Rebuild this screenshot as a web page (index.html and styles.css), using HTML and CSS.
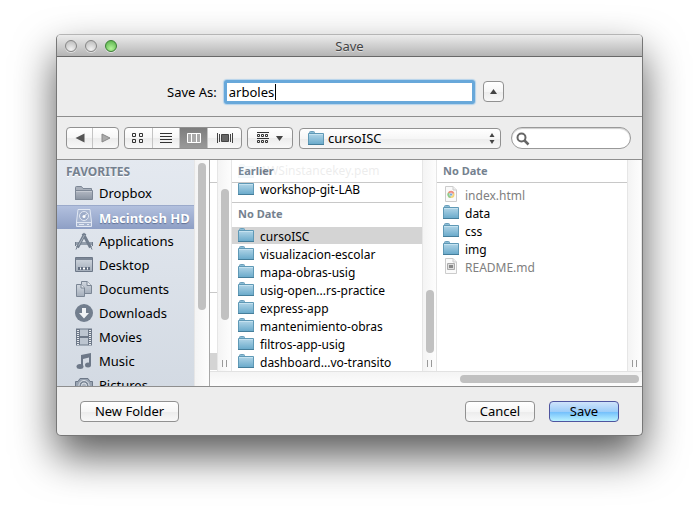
FILE: index.html
```html
<!DOCTYPE html>
<html lang="en">
<head>
<meta charset="utf-8">
<title>Save</title>
<link rel="stylesheet" href="styles.css">
</head>
<body>
<svg class="defs" aria-hidden="true">
  <defs>
    <linearGradient id="blue" x1="0" y1="0" x2="0" y2="1"><stop offset="0" stop-color="#b3d6e8"/><stop offset="1" stop-color="#68a9ca"/></linearGradient>
    <linearGradient id="slate" x1="0" y1="0" x2="0" y2="1"><stop offset="0" stop-color="#b4bac4"/><stop offset="1" stop-color="#8a94a2"/></linearGradient>
    <linearGradient id="pale" x1="0" y1="0" x2="0" y2="1"><stop offset="0" stop-color="#d3d9e1"/><stop offset="1" stop-color="#a3adba"/></linearGradient>
    <symbol id="folder" viewBox="0 0 16 14">
      <path d="M1.500 3V1.500Q1.500 .5 2.500 .5H5.500Q6.500 .5 6.500 1.500V2.500H14.500V6H1.500z" fill="#8bbdd6" stroke="#6a9fbb"/>
      <path d="M.5 2.500H15.500V13.500H.5z" fill="url(#blue)" stroke="#5f99b6"/>
      <path d="M0 13.500H16" stroke="#457e9b"/><path d="M1 3.500H15" stroke="#c5e2f0"/>
    </symbol>
  </defs>
</svg>
<main class="window">
  <header class="titlebar">
    <div class="lights">
      <button class="light" aria-label="Close"></button>
      <button class="light" aria-label="Minimize"></button>
      <button class="light green" aria-label="Zoom"></button>
    </div>
    <h1>Save</h1>
  </header>

  <section class="name-row">
    <label for="filename">Save As:</label>
    <div class="name-field"><input id="filename" type="text" value="arboles"><span class="caret"></span></div>
    <button class="btn collapse" aria-label="Collapse"><svg width="7" height="5" viewBox="0 0 7 5"><path d="M3.500 0L7 5H0z" fill="#444"/></svg></button>
  </section>

  <section class="toolbar">
    <div class="segments nav">
      <button aria-label="Back"><svg width="10" height="10" viewBox="0 0 10 10"><path d="M9.500 .5V9.500L.5 5z" fill="#555"/></svg></button>
      <button aria-label="Forward"><svg width="10" height="10" viewBox="0 0 10 10"><path d="M1 1V9L9 5z" fill="#aaa" stroke="#888"/></svg></button>
    </div>
    <div class="segments views">
      <button aria-label="Icon view"><svg width="12" height="12" viewBox="0 0 12 12" fill="none" stroke="#333"><path d="M.5 1.500h3v3h-3zM7.500 1.500h3v3h-3zM.5 7.500h3v3h-3zM7.500 7.500h3v3h-3z"/></svg></button>
      <button aria-label="List view"><svg width="12" height="12" viewBox="0 0 12 12" stroke="#333"><path d="M0 1.500H12M0 4.500H12M0 7.500H12M0 10.500H12"/></svg></button>
      <button class="on" aria-label="Column view"><svg width="14" height="12" viewBox="0 0 14 12" fill="#aaa" stroke="#fff"><path d="M.5 1.500H13.500V10.500H.5zM4.500 1.500V10.500M9.500 1.500V10.500"/></svg></button>
      <button aria-label="Cover flow"><svg width="16" height="12" viewBox="0 0 16 12"><path d="M.5 1V11M2.500 2V10M13.500 2V10M15.500 1V11" stroke="#444"/><path d="M4.500 2.500H11.500V9.500H4.500z" fill="#666" stroke="#444"/></svg></button>
    </div>
    <button class="btn arrange" aria-label="Arrange items"><svg width="12" height="12" viewBox="0 0 12 12" fill="none" stroke="#333"><path d="M0 .5H12M0 6.500H12M.5 2.500h2v2h-2zM4.500 2.500h2v2h-2zM8.500 2.500h2v2h-2zM.5 8.500h2v2h-2zM4.500 8.500h2v2h-2zM8.500 8.500h2v2h-2z"/></svg><svg width="7" height="5" viewBox="0 0 7 5"><path d="M0 0H7L3.500 5z" fill="#444"/></svg></button>
    <div class="popup">
      <svg class="popup-folder" width="16" height="14"><use href="#folder"/></svg>
      <select aria-label="Folder"><option>cursoISC</option></select>
      <svg class="popup-arrows" width="6" height="11" viewBox="0 0 6 11"><path d="M3 0L5.500 4H.5zM3 11L.5 7H5.500z" fill="#444"/></svg>
    </div>
    <div class="search">
      <svg width="14" height="14" viewBox="0 0 14 14" fill="none" stroke="#666"><circle cx="5.500" cy="5.500" r="4" stroke-width="2"/><path d="M8.500 8.500L12.500 12.500" stroke-width="2.500"/></svg>
      <input type="search" aria-label="Search">
    </div>
  </section>

  <section class="browser">
    <nav class="sidebar">
      <h2>FAVORITES</h2>
      <ul>
        <li><a href="#"><svg width="18" height="18" viewBox="0 0 18 18"><path d="M.5 15.500V3.500Q.5 2.500 1.500 2.500H6.500L8 4.500H16.500V15.500z" fill="#a9b0bb" stroke="#7d8795"/><path d="M.5 15.500V6.500H17.500V15.500z" fill="url(#slate)" stroke="#7d8795"/><path d="M1 7.500H17" stroke="#c5cad2"/></svg>Dropbox</a></li>
        <li class="selected"><a href="#"><svg width="18" height="18" viewBox="0 0 18 18"><path d="M3 .5H15L16.500 13V17.500H1.500V13z" fill="#a7b5d0" stroke="#e2e8f3"/><path d="M2 13.500H16M4 15.500H9M12 15.500H14" stroke="#e2e8f3"/><circle cx="9" cy="7" r="4.500" fill="#9dacc9" stroke="#e2e8f3"/><path d="M12 4.500L9 7.500" stroke="#fff"/><circle cx="9" cy="7.500" r="1.500" fill="#fff"/></svg>Macintosh HD</a></li>
        <li><a href="#"><svg width="18" height="18" viewBox="0 0 18 18" fill="none"><path d="M0 11.500H18" stroke="#929dab" stroke-width="3"/><path d="M.5 10V14M17.500 10V14" stroke="#6f7b8b"/><path d="M2.500 15.500L10 1.500M15.500 15.500L8 1.500" stroke="#727e8e" stroke-width="3"/><path d="M3.500 13.500L9.500 3" stroke="#a6b0bc"/><path d="M2.500 14L1 17.500M15.500 14L17 17.500" stroke="#6f7b8b"/></svg>Applications</a></li>
        <li><a href="#"><svg width="18" height="18" viewBox="0 0 18 18"><path d="M.5 1.500H17.500V15.500H.5z" fill="url(#pale)" stroke="#6d7888"/><path d="M1 3H17" stroke="#7c8796" stroke-width="2"/><path d="M3 11H15V14H3z" fill="#647082"/><path d="M5 12.500H6M8 12.500H10M12 12.500H13" stroke="#fff" stroke-width="2"/></svg>Desktop</a></li>
        <li><a href="#"><svg width="18" height="18" viewBox="0 0 18 18" stroke="#7b8695"><path d="M6.500 1.500H12L16.500 5.500V13.500H6.500z" fill="url(#pale)"/><path d="M12 1.500V5.500H16.500" fill="#e5e9ee"/><path d="M1.500 4.500H6L9.500 8V16.500H1.500z" fill="url(#pale)"/><path d="M6 4.500V8H9.500" fill="#e5e9ee"/></svg>Documents</a></li>
        <li><a href="#"><svg width="18" height="18" viewBox="0 0 18 18"><circle cx="9" cy="9" r="9" fill="#727e8e"/><path d="M7 4H11V9H14L9 14.500L4 9H7z" fill="#f0f3f6"/></svg>Downloads</a></li>
        <li><a href="#"><svg width="18" height="18" viewBox="0 0 18 18"><path d="M1 .5H17V17.500H1z" fill="#6d7888"/><path d="M5 1.500H13V8H5zM5 10H13V16.500H5z" fill="#bcc5d0"/><path d="M3 2V17M15 2V17" stroke="#e6eaef" stroke-width="2" stroke-dasharray="1 1"/></svg>Movies</a></li>
        <li><a href="#"><svg width="18" height="18" viewBox="0 0 18 18"><path d="M6 3L16 1V13.500H14V5.500L8 7V15H6z" fill="#6d7888"/><ellipse cx="5" cy="14.500" rx="3.500" ry="2.500" fill="#6d7888"/><ellipse cx="13" cy="13" rx="3" ry="2.500" fill="#6d7888"/></svg>Music</a></li>
        <li><a href="#"><svg width="18" height="18" viewBox="0 0 18 18"><path d="M.5 5.500H3L5 2.500H13L15 5.500H17.500V15.500H.5z" fill="#98a3b1" stroke="#6d7888"/><circle cx="9" cy="9.500" r="5" fill="#7b8796" stroke="#dfe4ea"/><circle cx="9" cy="9.500" r="2.500" fill="#aab3bf" stroke="#dfe4ea"/></svg>Pictures</a></li>
      </ul>
    </nav>
    <div class="track side-track"><i class="thumb"></i></div>
    <div class="panes">
      <div class="columns">
        <div class="column stub"><div class="stub-head"></div><div class="stub-body"></div><div class="stub-selected"></div></div>
        <div class="track first-track"><i class="thumb"></i><i class="grip"></i></div>
        <div class="column">
          <h3><span class="ghost" aria-hidden="true"><svg width="16" height="14"><use href="#folder"/></svg>AWSinstancekey.pem</span>Earlier</h3>
          <ul class="scrolled">
            <li><svg width="16" height="14"><use href="#folder"/></svg>workshop-git-LAB</li>
          </ul>
          <h3 class="group">No Date</h3>
          <ul>
            <li class="current"><svg width="16" height="14"><use href="#folder"/></svg>cursoISC</li>
            <li><svg width="16" height="14"><use href="#folder"/></svg>visualizacion-escolar</li>
            <li><svg width="16" height="14"><use href="#folder"/></svg>mapa-obras-usig</li>
            <li><svg width="16" height="14"><use href="#folder"/></svg>usig-open...rs-practice</li>
            <li><svg width="16" height="14"><use href="#folder"/></svg>express-app</li>
            <li><svg width="16" height="14"><use href="#folder"/></svg>mantenimiento-obras</li>
            <li><svg width="16" height="14"><use href="#folder"/></svg>filtros-app-usig</li>
            <li><svg width="16" height="14"><use href="#folder"/></svg>dashboard...vo-transito</li>
          </ul>
        </div>
        <div class="track second-track"><i class="thumb"></i><i class="grip"></i></div>
        <div class="column">
          <h3>No Date</h3>
          <ul class="padded">
            <li class="dim"><svg width="16" height="16" viewBox="0 0 16 16"><path d="M2.500 .5H10L13.500 4V15.500H2.500z" fill="#fafafa" stroke="#ccc"/><path d="M10 .5V4H13.500" fill="#eee" stroke="#ccc"/><circle cx="8" cy="8.500" r="3.500" fill="#f3d477"/><path d="M8 8.500L5 6.500A3.500 3.500 0 0 1 11.300 7z" fill="#ee8a80"/><path d="M8 8.500L5 6.500A3.500 3.500 0 0 0 7.500 12z" fill="#8ccb92"/><circle cx="8" cy="8.500" r="1.500" fill="#77a9dd" stroke="#fff" stroke-width=".5"/></svg>index.html</li>
            <li><svg width="16" height="14"><use href="#folder"/></svg>data</li>
            <li><svg width="16" height="14"><use href="#folder"/></svg>css</li>
            <li><svg width="16" height="14"><use href="#folder"/></svg>img</li>
            <li class="dim"><svg width="16" height="16" viewBox="0 0 16 16"><path d="M2.500 .5H10L13.500 4V15.500H2.500z" fill="#fafafa" stroke="#ccc"/><path d="M10 .5V4H13.500" fill="#eee" stroke="#ccc"/><path d="M4.500 5.500H11.500V11.500H4.500z" fill="#ddd" stroke="#aaa"/><path d="M6 7H10V10H6z" fill="#888"/></svg>README.md</li>
          </ul>
        </div>
        <div class="track"><i class="grip"></i></div>
      </div>
      <div class="h-track"><i class="h-thumb"></i></div>
    </div>
  </section>

  <footer class="actions">
    <button class="btn new-folder">New Folder</button>
    <button class="btn">Cancel</button>
    <button class="btn primary">Save</button>
  </footer>
</main>
</body>
</html>
```
FILE: styles.css
```css
* { box-sizing: border-box; }

body {
  margin: 0;
  padding: 34px 56px 78px;
  background: #fff;
  color: #000;
  font: 13px/18px "Noto Sans", "Open Sans", sans-serif;
  overflow: hidden;
}

h1, h2, h3, ul { margin: 0; padding: 0; list-style: none; }
button, input, select { font: inherit; color: inherit; margin: 0; padding: 0; }
svg { display: block; flex: none; }
.defs { position: absolute; width: 0; height: 0; }

.window {
  border: 1px solid #777;
  border-top-color: #b5b5b5;
  border-radius: 5px;
  background: #ededed;
  box-shadow: 0 20px 42px rgba(0, 0, 0, .65);
}

/* Title bar */
.titlebar {
  display: grid;
  grid-template-columns: 1fr auto 1fr;
  align-items: center;
  height: 22px;
  padding: 0 8px;
  border-bottom: 1px solid #686868;
  border-radius: 4px 4px 0 0;
  background: linear-gradient(#ececec, #b4b4b4);
}
.titlebar h1 { font-size: 13px; font-weight: 400; color: #444; text-shadow: 0 1px rgba(255, 255, 255, .5); }
.lights { display: flex; gap: 8px; }
.light {
  width: 12px;
  height: 12px;
  border: 1px solid #868686;
  border-radius: 50%;
  background: radial-gradient(circle at 50% 85%, #f2f2f2, #bdbdbd 90%);
  box-shadow: 0 1px rgba(255, 255, 255, .5);
}
.light.green { border-color: #3b7f34; background: radial-gradient(circle at 50% 75%, #b4f59a, #5ab24c 90%); }

/* Buttons */
.btn, .segments, .popup select {
  border: 1px solid #919191;
  border-radius: 4px;
  background: linear-gradient(#fff, #f6f6f6 50%, #ececec 51%, #f8f8f8);
}
.btn { display: flex; align-items: center; justify-content: center; width: 70px; height: 21px; }
.btn.primary { border-color: #4f559f; background: linear-gradient(#cfe3fb, #9dcdf9 50%, #70bdfb 51%, #b9f2ff); }

/* File name */
.name-row {
  display: flex;
  align-items: center;
  gap: 7px;
  height: 60px;
  padding: 10px 100px 0 110px;
  border-bottom: 1px solid #8e8e8e;
}
.name-field { position: relative; flex: 0 1 251px; }
.name-field input {
  display: block;
  width: 100%;
  height: 24px;
  padding: 0 2px;
  border: 3px solid #68a8da;
  border-radius: 3px;
  outline: 0;
  background: #fff;
  box-shadow: 0 0 1px 1px #b4d2ea;
}
.caret { position: absolute; left: 51px; top: 4px; width: 1px; height: 16px; background: #000; }
.collapse { width: 21px; margin-left: 1px; }

/* Toolbar */
.toolbar {
  display: flex;
  align-items: center;
  gap: 5px;
  height: 43px;
  padding: 0 11px 0 9px;
  border-bottom: 1px solid #8e8e8e;
}
.segments { display: flex; flex: none; height: 22px; overflow: hidden; }
.segments button {
  display: flex;
  flex: 1;
  align-items: center;
  justify-content: center;
  border: 0;
  background: none;
}
.segments button + button { border-left: 1px solid #c4c4c4; }
.segments .on { background: linear-gradient(#7d7d7d, #999); }
.nav { width: 53px; }
.views { width: 118px; }
.views button:last-child { flex: 0 0 34px; }
.arrange { flex: none; width: 46px; height: 22px; gap: 7px; }
.popup { position: relative; flex: 1; margin: 0 5px 0 1px; }
.popup select { display: block; appearance: none; width: 100%; height: 21px; padding: 0 20px 0 28px; }
.popup-folder { position: absolute; left: 9px; top: 3px; }
.popup-arrows { position: absolute; right: 6px; top: 5px; }
.search { position: relative; flex: none; width: 120px; }
.search input {
  display: block;
  appearance: none;
  width: 100%;
  height: 22px;
  padding: 0 8px 0 22px;
  border: 1px solid #999;
  border-radius: 11px;
  background: #fff;
  box-shadow: inset 0 1px 1px #ccc;
}
.search svg { position: absolute; left: 5px; top: 5px; }

/* Browser */
.browser { display: flex; height: 227px; border-bottom: 1px solid #8e8e8e; background: #fff; }
.sidebar { flex: none; width: 137px; overflow: hidden; background: linear-gradient(#e4e9f0, #d3dae3); }
.sidebar h2 { height: 21px; padding-left: 9px; font-size: 12px; line-height: 24px; color: #75818f; text-shadow: 0 1px #fff; }
.sidebar a { display: flex; align-items: center; gap: 6px; height: 24px; padding-left: 18px; color: #000; text-decoration: none; white-space: nowrap; }
.sidebar .selected a {
  border-top: 1px solid #9baacb;
  background: linear-gradient(#b2c0de, #8e9fc5);
  color: #fff;
  font-weight: 700;
  text-shadow: 0 1px 1px #5f6f93;
}

.track { position: relative; flex: none; width: 15px; border: solid #e6e6e6; border-width: 0 1px; background: linear-gradient(90deg, #f4f4f4, #fdfdfd); }
.side-track { width: 16px; border-right-color: #a8a8a8; }
.thumb { position: absolute; left: 3px; width: 8px; border-radius: 4px; background: #c1c1c1; }
.side-track .thumb { top: 3px; height: 147px; }
.first-track .thumb { top: 29px; height: 131px; }
.second-track .thumb { top: 130px; height: 63px; }
.grip { position: absolute; left: 4px; bottom: 4px; width: 5px; height: 7px; border: solid #999; border-width: 0 1px; }

.panes { display: flex; flex: 1; flex-direction: column; min-width: 0; }
.columns { display: flex; flex: 1; min-height: 0; }
.column { flex: 1 1 0; min-width: 0; overflow: hidden; }
.stub { display: flex; flex: 0 0 7px; flex-direction: column; }
.stub-head { height: 23px; border-bottom: 1px solid #c8c8c8; }
.stub-body { height: 110px; border-bottom: 1px solid #c8c8c8; }
.stub-selected { height: 17px; margin: auto 0 1px; background: #d4d4d4; }

.column h3 {
  position: relative;
  height: 23px;
  padding-left: 6px;
  border-bottom: 1px solid #c8c8c8;
  background: #fff;
  font-size: 11px;
  line-height: 22px;
  color: #75818f;
}
.column .group { height: 25px; margin-top: 5px; border-top: 1px solid #c8c8c8; border-bottom: 0; }
.ghost { position: absolute; left: 6px; top: 0; display: flex; align-items: center; gap: 6px; color: #000; font-size: 12px; font-weight: 400; opacity: .07; }
.column li { display: flex; align-items: flex-start; gap: 6px; height: 17px; margin-bottom: 1px; padding: 1px 0 0 6px; font-size: 12px; white-space: nowrap; }
.column .scrolled { margin-top: -3px; }
.column .padded { padding-top: 3px; }
.column .current { background: #d4d4d4; }
.column .dim { color: #808080; }
.dim svg { margin-top: -1px; }

.h-track { display: flex; justify-content: flex-end; align-items: center; height: 15px; padding-right: 3px; border-top: 1px solid #e2e2e2; background: linear-gradient(#f4f4f4, #fdfdfd); }
.h-thumb { width: 179px; height: 8px; border-radius: 4px; background: #c1c1c1; }

/* Actions */
.actions { display: flex; align-items: center; gap: 14px; height: 48px; padding: 0 23px; }
.new-folder { width: 99px; margin-right: auto; }
```
